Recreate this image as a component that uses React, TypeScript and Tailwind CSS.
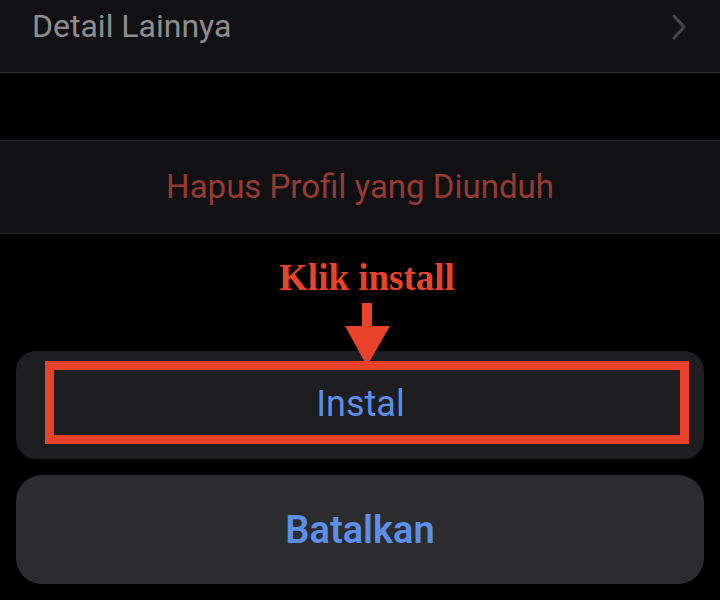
export default function App() {
  return (
    <div className="relative h-[600px] w-[720px] overflow-hidden bg-black font-['Roboto',sans-serif]">
      {/* Detail row */}
      <div className="flex h-[73px] items-center justify-between border-b border-[#2a2a2d] bg-[#111113] pb-[20px] pl-8 pr-[34px]">
        <span className="text-[32px] leading-9 text-[#8d8d90]">Detail Lainnya</span>
        <svg width="14" height="26" viewBox="0 0 14 26" className="mt-[2px]">
          <polyline points="2,2 12,13 2,24" fill="none" stroke="#48484b" strokeWidth="3" strokeLinecap="round" strokeLinejoin="round" />
        </svg>
      </div>

      <div className="h-[67px]" />

      {/* Hapus row */}
      <div className="flex h-[94px] items-center justify-center border-y border-[#2a2a2d] bg-[#111113]">
        <span className="text-[33px] leading-9 text-[#963a33]">Hapus Profil yang Diunduh</span>
      </div>

      {/* Annotation */}
      <div className="flex h-[117px] justify-center pt-[24px]">
        <span className="ml-[14px] font-['Liberation_Serif',serif] text-[37px] font-bold leading-10 text-[#e8442b]">
          Klik install
        </span>
      </div>

      {/* Install group */}
      <div className="mx-4 h-[108px] rounded-[20px] bg-[#1e1e20] pb-[15px] pl-[29px] pr-[15px] pt-[10px]">
        <div className="flex h-full items-center justify-center border-[9px] border-[#e8432a] pr-[13px] pt-[3px]">
          <span className="text-[36px] leading-10 text-[#5b8fe9]">Instal</span>
        </div>
      </div>

      {/* Batalkan */}
      <div className="mx-4 mt-4 flex h-[109px] items-center justify-center rounded-[26px] bg-[#2c2c2e]">
        <span className="text-[38px] font-semibold leading-10 text-[#5b8fe9]">Batalkan</span>
      </div>

      {/* Arrow overlay */}
      <svg className="absolute left-[340px] top-[300px]" width="54" height="68" viewBox="0 0 54 68">
        <rect x="22" y="3" width="10" height="25" fill="#e8432a" />
        <polygon points="5,26 50,26 27,66" fill="#e8432a" />
      </svg>
    </div>
  );
}
